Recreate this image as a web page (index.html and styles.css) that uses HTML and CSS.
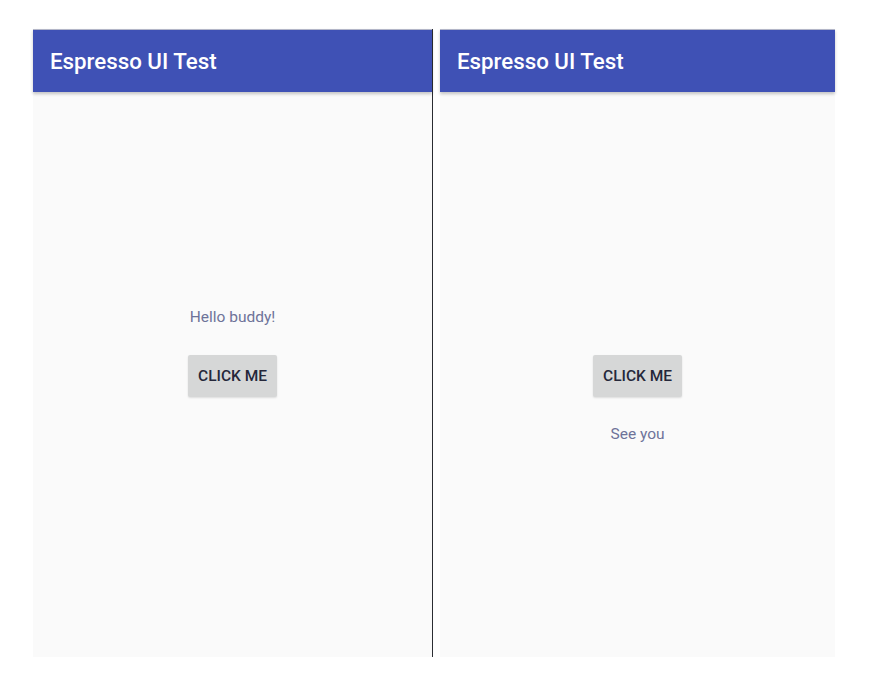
FILE: index.html
```html
<!DOCTYPE html>
<html>
<head>
<meta charset="utf-8">
<link rel="stylesheet" href="styles.css">
</head>
<body>
<div class="stage">
  <div class="phone phone-left">
    <div class="appbar"><span class="title">Espresso UI Test</span></div>
    <div class="content content-left">
      <div class="label">Hello buddy!</div>
      <button class="btn btn-left">CLICK ME</button>
    </div>
  </div>
  <div class="divider"></div>
  <div class="phone phone-right">
    <div class="appbar"><span class="title">Espresso UI Test</span></div>
    <div class="content content-right">
      <button class="btn">CLICK ME</button>
      <div class="label label-below">See you</div>
    </div>
  </div>
</div>
</body>
</html>
```
FILE: styles.css
```css
html, body {
  margin: 0;
  padding: 0;
  background: #ffffff;
}
body {
  font-family: Roboto, "Noto Sans", sans-serif;
}
.stage {
  display: flex;
  align-items: flex-start;
  padding-top: 29px;
  padding-left: 33px;
}
.phone {
  height: 628px;
  background: #fafafa;
  display: flex;
  flex-direction: column;
}
.phone-left {
  width: 399px;
}
.phone-right {
  width: 395px;
  margin-left: 7px;
}
.divider {
  width: 1px;
  height: 628px;
  background: #2b2d33;
}
.appbar {
  height: 62px;
  border-top: 1px solid #b3b6c8;
  background: #3f51b5;
  display: flex;
  align-items: center;
  padding-left: 17px;
  box-shadow: 0 2px 3px rgba(0, 0, 0, 0.22);
  position: relative;
  z-index: 1;
}
.title {
  color: #ffffff;
  font-size: 22.3px;
  font-weight: 500;
}
.content {
  display: flex;
  flex-direction: column;
  align-items: center;
}
.content-left {
  padding-top: 215px;
}
.content-right {
  padding-top: 263px;
}
.label {
  font-size: 15.5px;
  line-height: 20px;
  color: #6e7399;
}
.label-below {
  margin-top: 27px;
}
.btn {
  width: 89px;
  height: 42px;
  border: none;
  border-radius: 2px;
  background: #d6d7d7;
  color: #25273a;
  font-family: Roboto, "Noto Sans", sans-serif;
  font-size: 15.5px;
  font-weight: 500;
  padding: 0;
  box-shadow: 0 1px 2px rgba(0, 0, 0, 0.12);
}
.btn-left {
  margin-top: 28px;
}
```
